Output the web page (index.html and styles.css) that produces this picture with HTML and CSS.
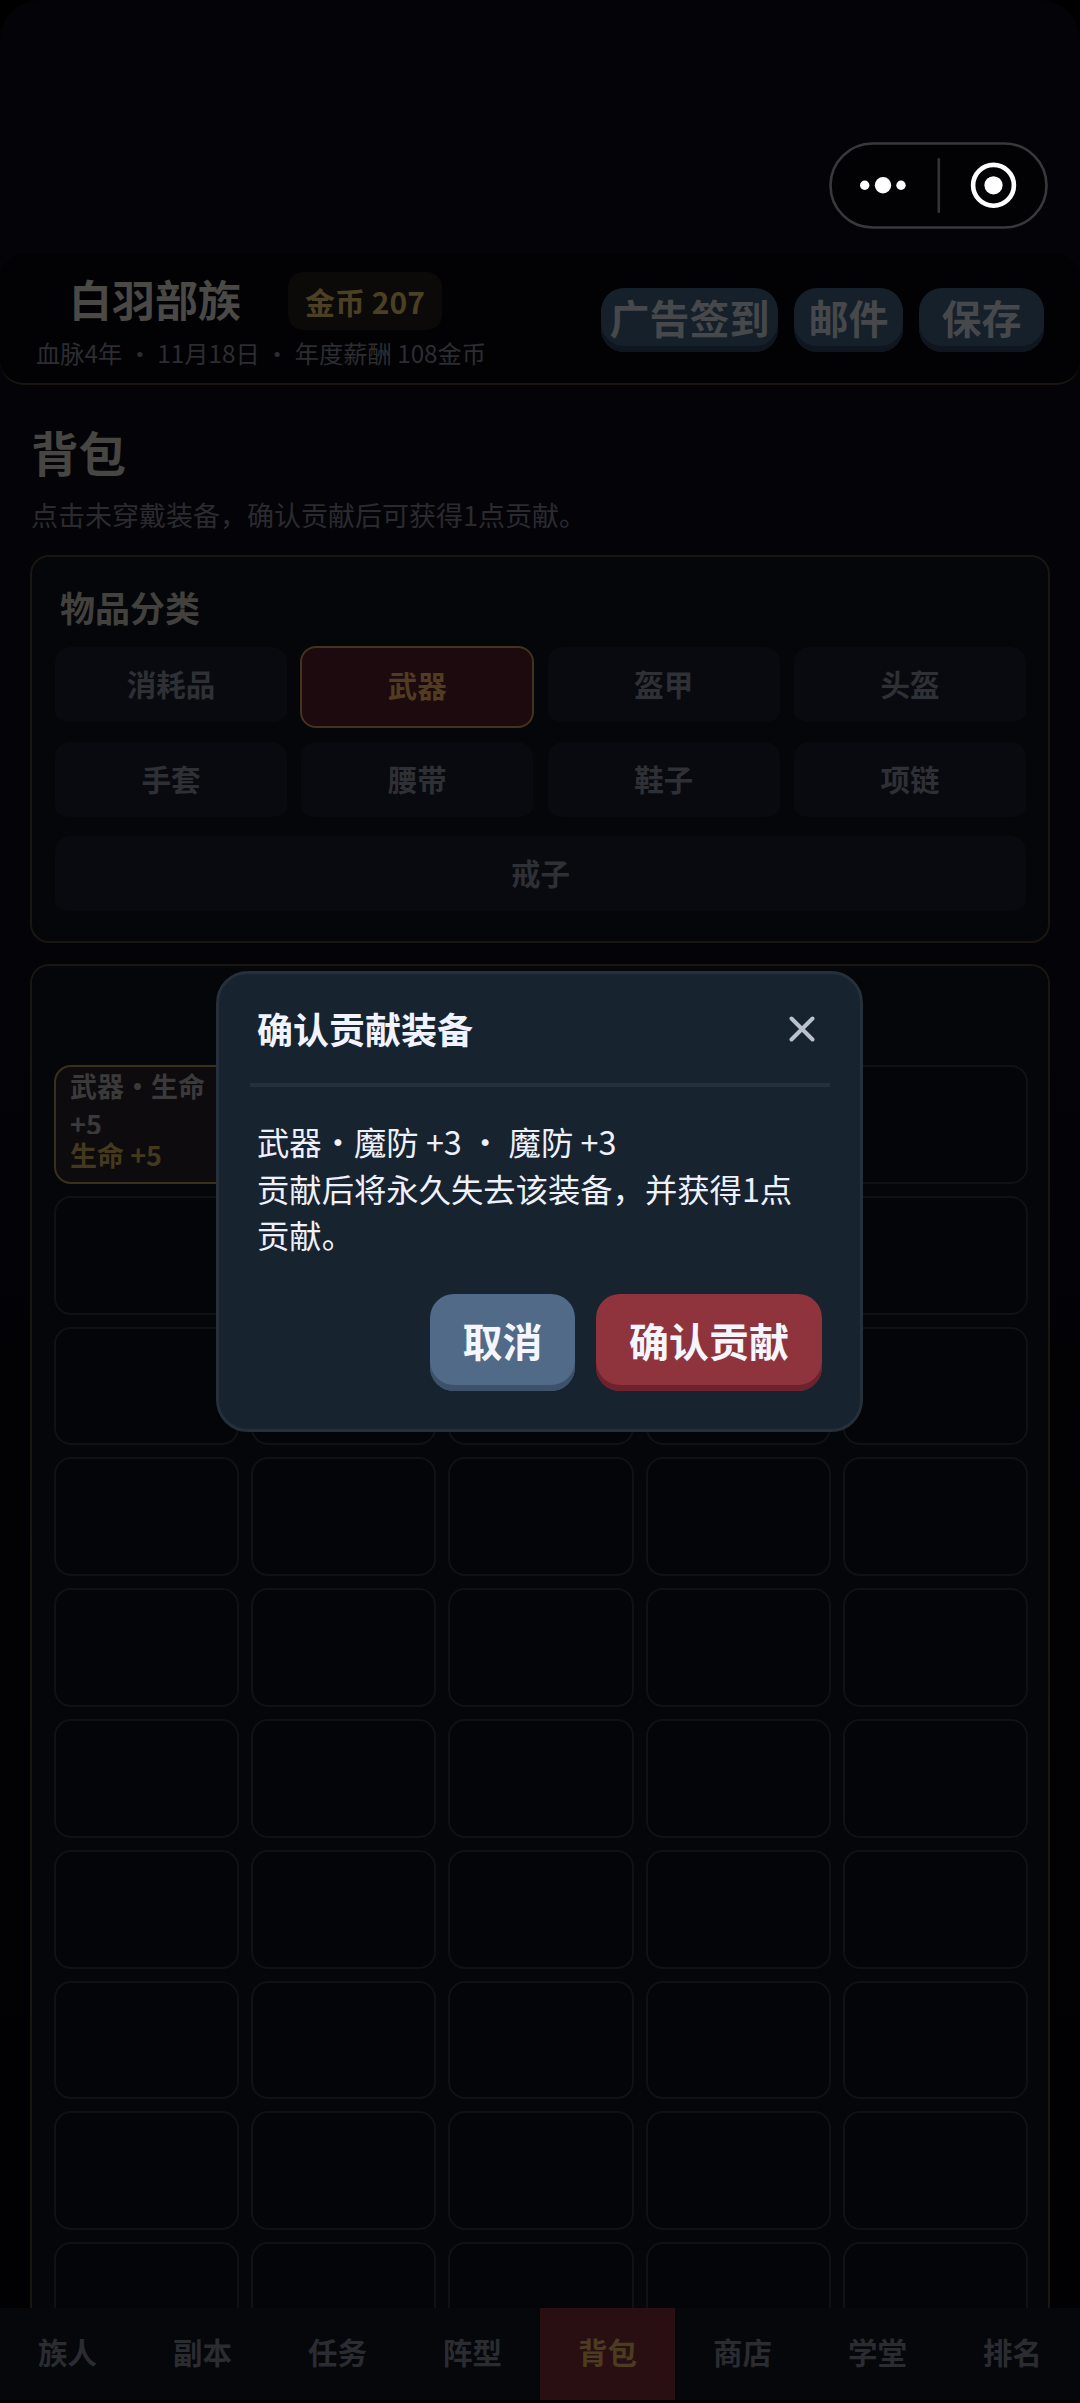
FILE: index.html
```html
<!DOCTYPE html>
<html lang="zh-CN">
<head>
<meta charset="utf-8">
<title>背包</title>
<link rel="stylesheet" href="styles.css">
</head>
<body>
<div class="screen">
  <header class="topbar">
    <div class="clan">
      <div class="clan-row"><h1 class="clan-name">白羽部族</h1><span class="gold">金币 207</span></div>
      <p class="clan-meta">血脉4年 ・ 11月18日 ・ 年度薪酬 108金币</p>
    </div>
    <div class="actions">
      <button class="act act-wide">广告签到</button>
      <button class="act act-mail">邮件</button>
      <button class="act act-save">保存</button>
    </div>
  </header>

  <main class="content">
    <h2 class="page-title">背包</h2>
    <p class="page-hint">点击未穿戴装备，确认贡献后可获得1点贡献。</p>

    <section class="card categories">
      <h3 class="card-title">物品分类</h3>
      <div class="tabs">
        <div class="tab">消耗品</div>
        <div class="tab active">武器</div>
        <div class="tab">盔甲</div>
        <div class="tab">头盔</div>
        <div class="tab">手套</div>
        <div class="tab">腰带</div>
        <div class="tab">鞋子</div>
        <div class="tab">项链</div>
        <div class="tab full">戒子</div>
      </div>
    </section>

    <section class="card bag">
      <div class="slots">
        <div class="slot item"><div class="item-name">武器・生命 +5</div><div class="item-stat">生命 +5</div></div>
        <div class="slot"></div><div class="slot"></div><div class="slot"></div><div class="slot"></div>
        <div class="slot"></div><div class="slot"></div><div class="slot"></div><div class="slot"></div><div class="slot"></div>
        <div class="slot"></div><div class="slot"></div><div class="slot"></div><div class="slot"></div><div class="slot"></div>
        <div class="slot"></div><div class="slot"></div><div class="slot"></div><div class="slot"></div><div class="slot"></div>
        <div class="slot"></div><div class="slot"></div><div class="slot"></div><div class="slot"></div><div class="slot"></div>
        <div class="slot"></div><div class="slot"></div><div class="slot"></div><div class="slot"></div><div class="slot"></div>
        <div class="slot"></div><div class="slot"></div><div class="slot"></div><div class="slot"></div><div class="slot"></div>
        <div class="slot"></div><div class="slot"></div><div class="slot"></div><div class="slot"></div><div class="slot"></div>
        <div class="slot"></div><div class="slot"></div><div class="slot"></div><div class="slot"></div><div class="slot"></div>
        <div class="slot"></div><div class="slot"></div><div class="slot"></div><div class="slot"></div><div class="slot"></div>
      </div>
    </section>
  </main>

  <nav class="nav">
    <div class="nav-item">族人</div>
    <div class="nav-item">副本</div>
    <div class="nav-item">任务</div>
    <div class="nav-item">阵型</div>
    <div class="nav-item current">背包</div>
    <div class="nav-item">商店</div>
    <div class="nav-item">学堂</div>
    <div class="nav-item">排名</div>
  </nav>

  <svg class="capsule" width="220" height="88" viewBox="0 0 220 88">
    <rect x="1.5" y="1.5" width="216" height="84" rx="42" fill="#020204" stroke="#39393b" stroke-width="2.6"/>
    <rect x="108.5" y="16" width="2.6" height="55" rx="1.3" fill="#343436"/>
    <g fill="#fff">
      <circle cx="35.7" cy="43.3" r="4.7"/><circle cx="54" cy="43.3" r="8.2"/><circle cx="72" cy="43.3" r="4.7"/>
      <circle cx="164.5" cy="43.3" r="9.1"/>
    </g>
    <circle cx="164.5" cy="43.3" r="20.4" fill="none" stroke="#fff" stroke-width="4.6"/>
  </svg>

  <div class="modal" role="dialog">
    <div class="modal-head">
      <h3 class="modal-title">确认贡献装备</h3>
      <svg class="close" width="26" height="26" viewBox="0 0 26 26"><path d="M2.5 2.5L23.5 23.5M23.5 2.5L2.5 23.5" stroke="#b9c0cf" stroke-width="4" stroke-linecap="round"/></svg>
    </div>
    <p class="modal-text">武器・魔防 +3 ・ 魔防 +3<br>贡献后将永久失去该装备，并获得1点<br>贡献。</p>
    <div class="modal-actions">
      <button class="btn cancel">取消</button>
      <button class="btn confirm">确认贡献</button>
    </div>
  </div>
</div>
</body>
</html>
```
FILE: styles.css
```css
* { box-sizing: border-box; margin: 0; padding: 0; }
body {
  background: #000;
  font-family: "Noto Sans CJK SC", "Noto Sans", sans-serif;
}
button { border: 0; font: inherit; }
.screen {
  position: relative;
  width: 1080px;
  height: 2403px;
  overflow: hidden;
  display: flex;
  flex-direction: column;
  padding-top: 255px;
  border-radius: 40px 40px 0 0;
  background: linear-gradient(#040308 0, #040308 900px, #020205 1500px, #010103 100%);
}

.topbar {
  flex: none;
  height: 130px;
  display: flex;
  justify-content: space-between;
  padding: 0 36px;
  background: #020204;
  border-bottom: 2px solid #1a160f;
  border-radius: 24px;
}
.clan-row { display: flex; align-items: center; height: 58px; margin-top: 17px; padding-left: 33px; }
.clan-name { font-size: 43px; line-height: 58px; margin-top: -7px; font-weight: 700; color: #4a4946; }
.gold {
  margin-left: 47px;
  width: 154px;
  height: 58px;
  border-radius: 15px;
  background: #0c0a08;
  color: #4b4024;
  font-size: 30px;
  line-height: 58px;
  font-weight: 700;
  text-align: center;
}
.clan-meta { margin-top: 5px; font-size: 24.25px; line-height: 36px; color: #2d2d31; white-space: nowrap; }
.actions { display: flex; gap: 16px; margin-top: 33px; }
.act {
  height: 64px;
  padding-bottom: 5px;
  border-radius: 23px;
  background: #16202a;
  box-shadow: inset 0 -6px 0 #10161f;
  color: #46484b;
  font-size: 40px;
  line-height: 59px;
  font-weight: 700;
  white-space: nowrap;
}
.act-wide { width: 177px; }
.act-mail { width: 109px; }
.act-save { width: 125px; }

.content { flex: 1; min-height: 0; overflow: hidden; padding: 33px 30px 0; }
.page-title { padding-left: 1px; font-size: 47.5px; line-height: 68px; font-weight: 700; color: #474643; }
.page-hint { margin-top: 9px; padding-left: 1px; font-size: 27px; line-height: 40px; color: #2b2b2f; }
.card { border: 2px solid #1a1611; border-radius: 19px; background: #050609; }
.categories { height: 388px; margin-top: 20px; padding: 25px 21px 0 22px; }
.card-title { padding-left: 6px; font-size: 35px; line-height: 50px; font-weight: 700; color: #42413e; }
.tabs { display: grid; grid-template-columns: repeat(4, 1fr); gap: 12.5px; margin-top: 14px; }
.tab {
  height: 82px;
  border: 1px solid transparent;
  border-bottom-width: 6px;
  border-radius: 16px;
  background: #080a0f padding-box;
  color: #2f3035;
  font-size: 29.5px;
  line-height: 73px;
  font-weight: 700;
  text-align: center;
}
.tab.active { background: #1d0a0f; border: 2px solid #43331f; color: #513c1f; line-height: 72px; }
.tab.full { grid-column: 1 / -1; }
.bag { margin-top: 21px; height: 1420px; padding: 99px 20px 0 22px; }
.slots { display: grid; grid-template-columns: repeat(5, 1fr); gap: 12px; }
.slot { height: 118.8px; border: 2px solid #101114; border-radius: 17px; background: #040508; min-width: 0; }
.item { padding: 0 14px; border-color: #39301b; background: #0e0b0e; font-size: 27px; font-weight: 700; }
.item-name { height: 67px; overflow: hidden; line-height: 38px; color: #3b3a3b; }
.item-stat { margin-top: 2px; line-height: 38px; color: #44391c; }

.nav { flex: none; display: grid; grid-template-columns: repeat(8, 1fr); height: 92px; margin-bottom: 3px; background: #05070b; }
.nav-item { font-size: 29.5px; line-height: 86px; font-weight: 700; text-align: center; color: #2b2c31; }
.nav-item.current { background: #290e12; color: #4b3b1f; }

.capsule { position: absolute; left: 828.5px; top: 142px; }

.modal {
  position: absolute;
  left: 216px;
  top: 971px;
  width: 647px;
  height: 461px;
  padding: 0 30px 0 31px;
  border: 3px solid #25303b;
  border-radius: 32px;
  background: #17232e;
}
.modal-head {
  display: flex;
  align-items: center;
  justify-content: space-between;
  height: 113px;
  padding: 0 15px 0 7px;
  border-bottom: 4px solid #25303b;
}
.modal-title { font-size: 36px; font-weight: 700; color: #f1f4ff; line-height: 50px; margin-top: -1px; }
.close { margin-bottom: 0; }
.modal-text { padding: 31px 7px 0; font-size: 32.35px; line-height: 46.7px; color: #eef1fb; white-space: nowrap; }
.modal-actions { display: flex; justify-content: flex-end; gap: 21px; margin-top: 36px; padding-right: 8px; }
.btn { height: 97px; padding-bottom: 5px; border-radius: 24px; color: #f4f5fd; font-size: 40px; line-height: 92px; font-weight: 700; white-space: nowrap; }
.cancel { width: 145px; background: #506a88; box-shadow: inset 0 -6px 0 #3d516b; }
.confirm { width: 226px; background: #8f343d; box-shadow: inset 0 -6px 0 #6d222e; }
```
